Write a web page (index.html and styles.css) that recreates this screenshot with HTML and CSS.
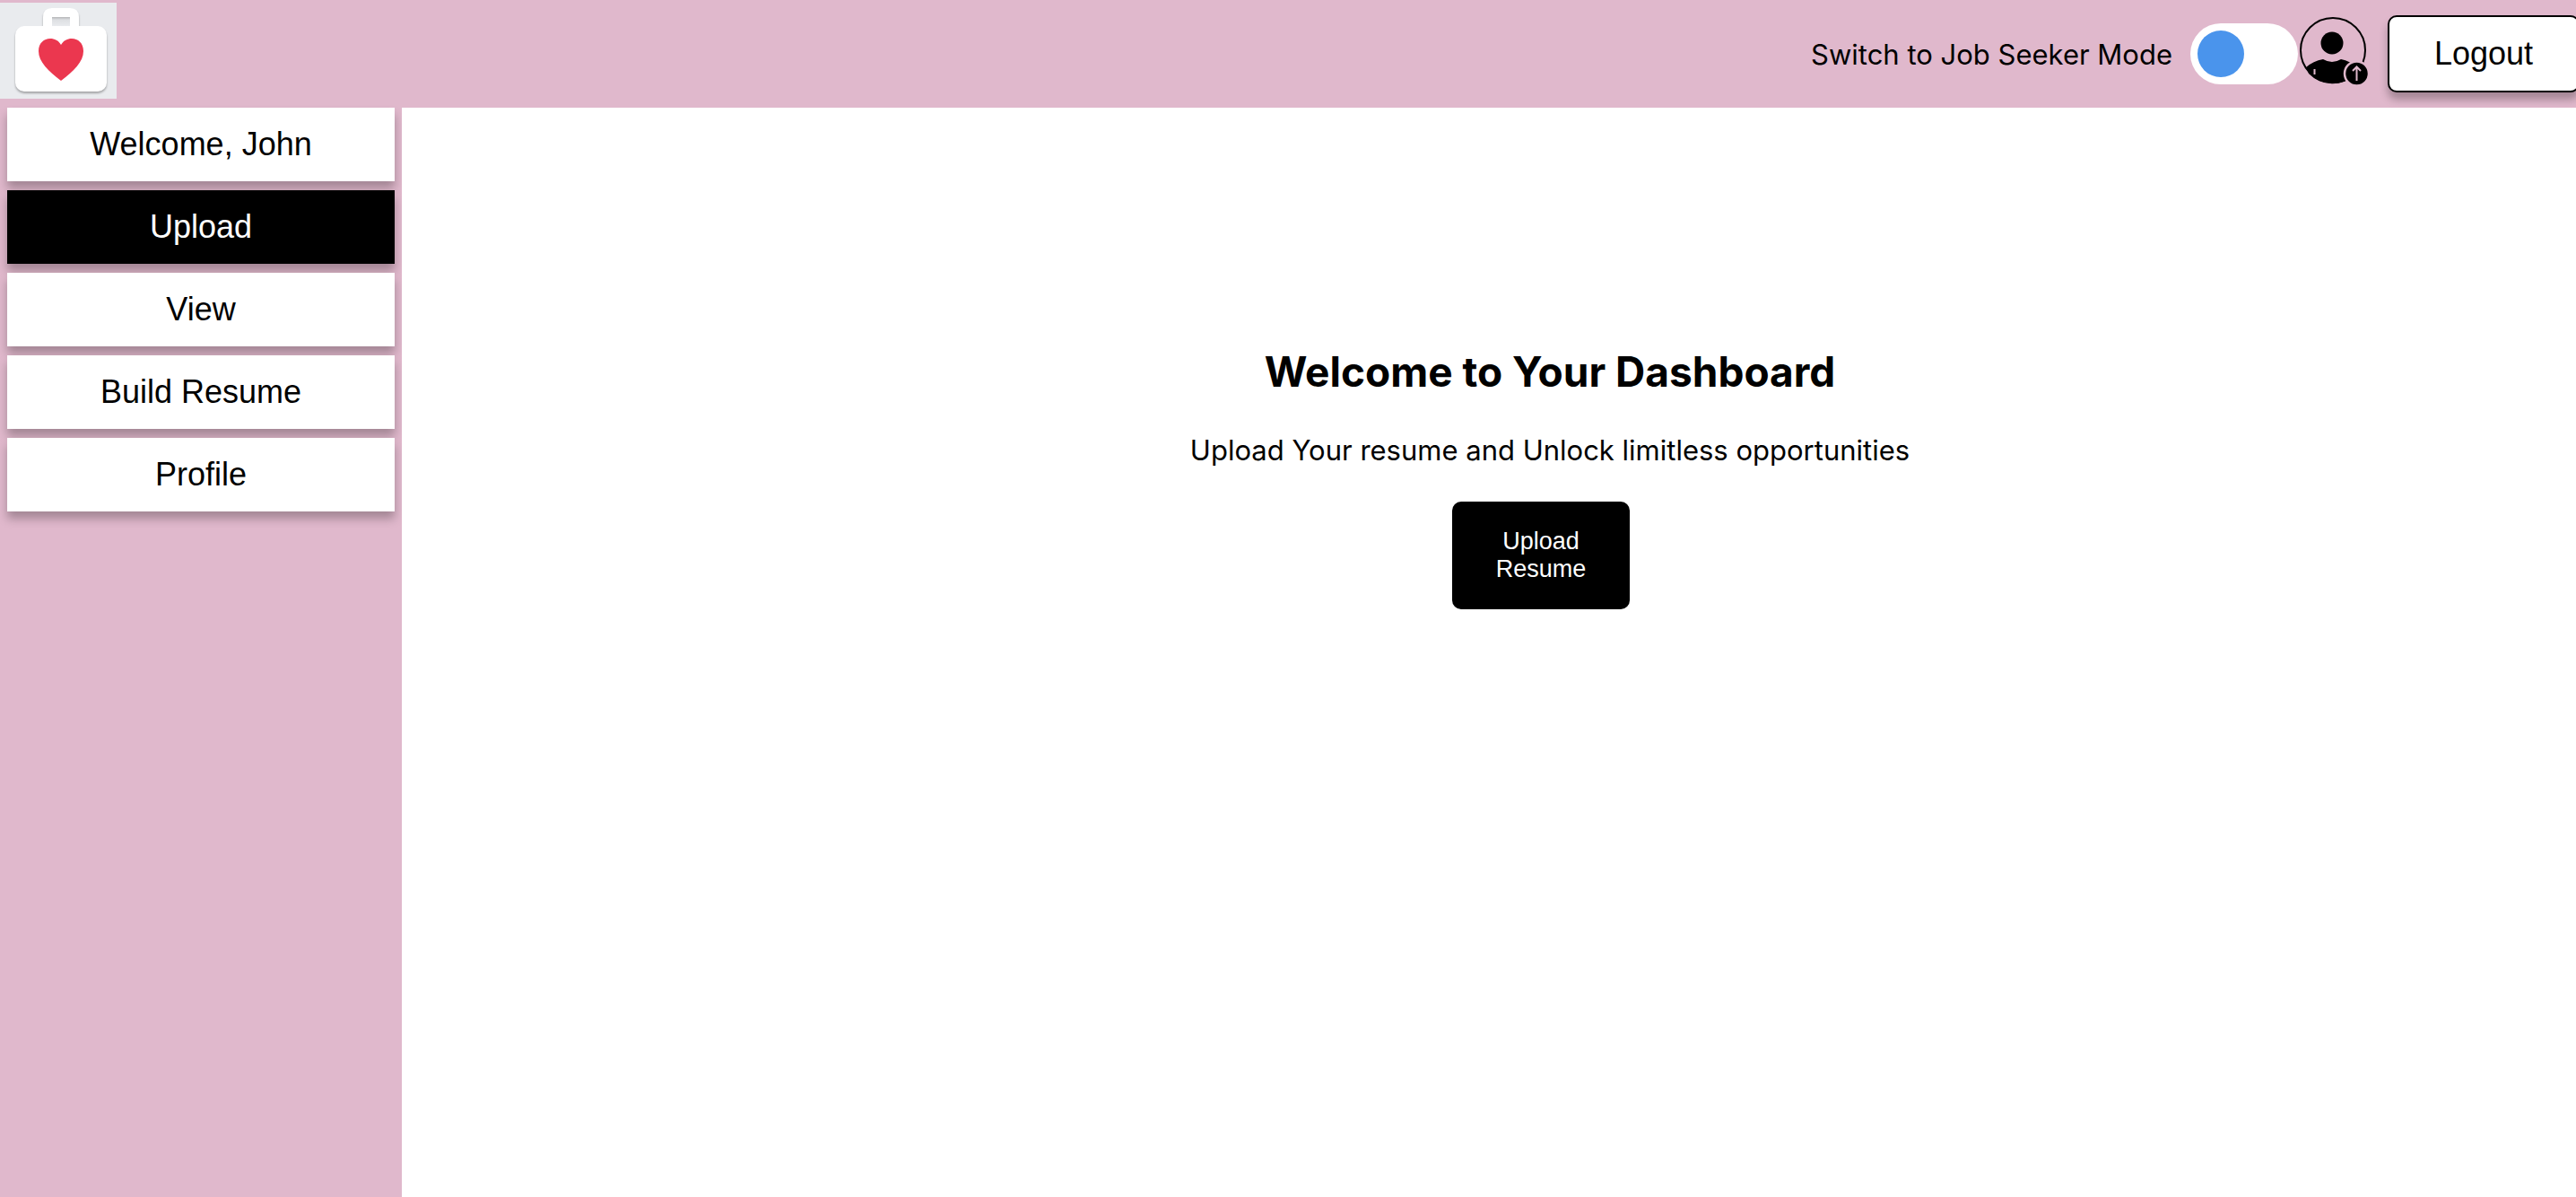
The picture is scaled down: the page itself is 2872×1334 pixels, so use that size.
FILE: index.html
```
<!DOCTYPE html>
<html lang="en">
<head>
<meta charset="utf-8">
<meta name="viewport" content="width=device-width, initial-scale=1">
<title>Dashboard</title>
<link rel="stylesheet" href="styles.css">
</head>
<body>
<header class="topbar">
  <svg class="logo" viewBox="0 0 130 107" role="img" aria-label="Briefcase with a heart">
    <defs>
      <linearGradient id="shade" x1="0" y1="0" x2="0" y2="1">
        <stop offset="0" stop-color="#b4b5b8"/>
        <stop offset="0.3" stop-color="#dddfe2"/>
        <stop offset="1" stop-color="#e9ebee"/>
      </linearGradient>
    </defs>
    <rect width="130" height="107" fill="#e9ebee"/>
    <g class="logo-bag">
      <path d="M48 32V16Q48 6 58 6H78Q88 6 88 16V32Z" fill="#fff"/>
      <rect x="17" y="26" width="102" height="73" rx="10" fill="#fff"/>
    </g>
    <rect x="58" y="16" width="20" height="10" fill="url(#shade)"/>
    <path d="M68 87C54 76 43 66 43 54C43 45 49 40 56 40C61 40 65 42 68 47C71 42 75 40 80 40C87 40 93 45 93 54C93 66 82 76 68 87Z" fill="#eb374f"/>
  </svg>
  <div class="actions">
    <label class="mode" for="mode">Switch to Job Seeker Mode</label>
    <input class="switch" type="checkbox" role="switch" id="mode">
    <svg class="avatar" viewBox="0 0 80 80" role="img" aria-label="Account">
      <circle cx="39" cy="40" r="36" fill="none" stroke="#000" stroke-width="2"/>
      <circle cx="38" cy="32" r="12.500"/>
      <path d="M9 59Q17 52 28 50Q38 56 48 50Q58 52 66 59L64 67A37 37 0 0 1 12 66Z"/>
      <path d="M18.500 61V67" stroke="#e0b8cc" stroke-width="2"/>
      <circle cx="65.500" cy="66" r="13.500" stroke="#e0b8cc" stroke-width="2.500"/>
      <path d="M65.500 74V59M61 63L65.500 58.500L70 63" fill="none" stroke="#e0b8cc" stroke-width="2"/>
    </svg>
    <button class="logout" type="button">Logout</button>
  </div>
</header>
<div class="layout">
  <nav class="sidebar" aria-label="Dashboard">
    <button class="item" type="button">Welcome, John</button>
    <button class="item active" type="button" aria-current="page">Upload</button>
    <button class="item" type="button">View</button>
    <button class="item" type="button">Build Resume</button>
    <button class="item" type="button">Profile</button>
  </nav>
  <main class="content">
    <h1 class="title">Welcome to Your Dashboard</h1>
    <p class="lead">Upload Your resume and Unlock limitless opportunities</p>
    <button class="upload" type="button">Upload Resume</button>
  </main>
</div>
</body>
</html>
```
FILE: styles.css
```
* {
  box-sizing: border-box;
}

body {
  margin: 0;
  min-height: 100vh;
  display: flex;
  flex-direction: column;
  overflow-x: hidden;
  background: #fff;
  color: #000;
  font-family: Inter, "Liberation Sans", sans-serif;
  font-size: 31px;
}

button {
  font-family: "Liberation Sans", Arial, sans-serif;
  font-size: 36px;
  cursor: pointer;
}

.topbar {
  display: flex;
  align-items: center;
  justify-content: space-between;
  height: 120px;
  background: #e0b8cc;
}

.logo {
  width: 130px;
  height: 107px;
  margin-bottom: 7px;
}

.logo-bag {
  filter: drop-shadow(0 2px 1px rgba(0, 0, 0, 0.3));
}

.actions {
  display: flex;
  align-items: center;
  margin-right: -4px;
}

.mode {
  margin-right: 20px;
}

.switch {
  appearance: none;
  width: 120px;
  height: 68px;
  margin: 0;
  padding: 8px;
  border-radius: 34px;
  background: #fff;
  cursor: pointer;
}

.switch::before {
  content: "";
  display: block;
  width: 52px;
  height: 52px;
  border-radius: 50%;
  background: #4a94ec;
}

.switch:checked::before {
  margin-left: auto;
}

.avatar {
  width: 80px;
  height: 80px;
  margin: 0 20px 8px 0;
}

.logout {
  width: 214px;
  height: 86px;
  border: 2px solid #000;
  border-radius: 10px;
  background: #fff;
  color: #000;
  box-shadow: 0 8px 10px rgba(0, 0, 0, 0.27);
}

.layout {
  flex: 1;
  display: flex;
}

.sidebar {
  flex: none;
  display: flex;
  flex-direction: column;
  gap: 10px;
  width: 448px;
  padding: 0 8px;
  background: #e0b8cc;
}

.item {
  height: 82px;
  border: 0;
  background: #fff;
  color: #000;
  box-shadow: 0 8px 10px rgba(0, 0, 0, 0.27);
}

.active {
  background: #000;
  color: #fff;
}

.content {
  flex: 1;
  display: flex;
  flex-direction: column;
  align-items: center;
  padding: 264px 0 0 136px;
  background: #fff;
  position: relative;
}

.title {
  margin: 0;
  font-size: 46px;
  line-height: 60px;
}

.lead {
  margin: 37px 0;
  line-height: 41px;
}

.upload {
  width: 198px;
  height: 120px;
  margin-right: 20px;
  padding: 0 40px;
  border: 0;
  border-radius: 10px;
  background: #000;
  color: #fff;
  font-size: 27px;
  line-height: 31px;
}
```
